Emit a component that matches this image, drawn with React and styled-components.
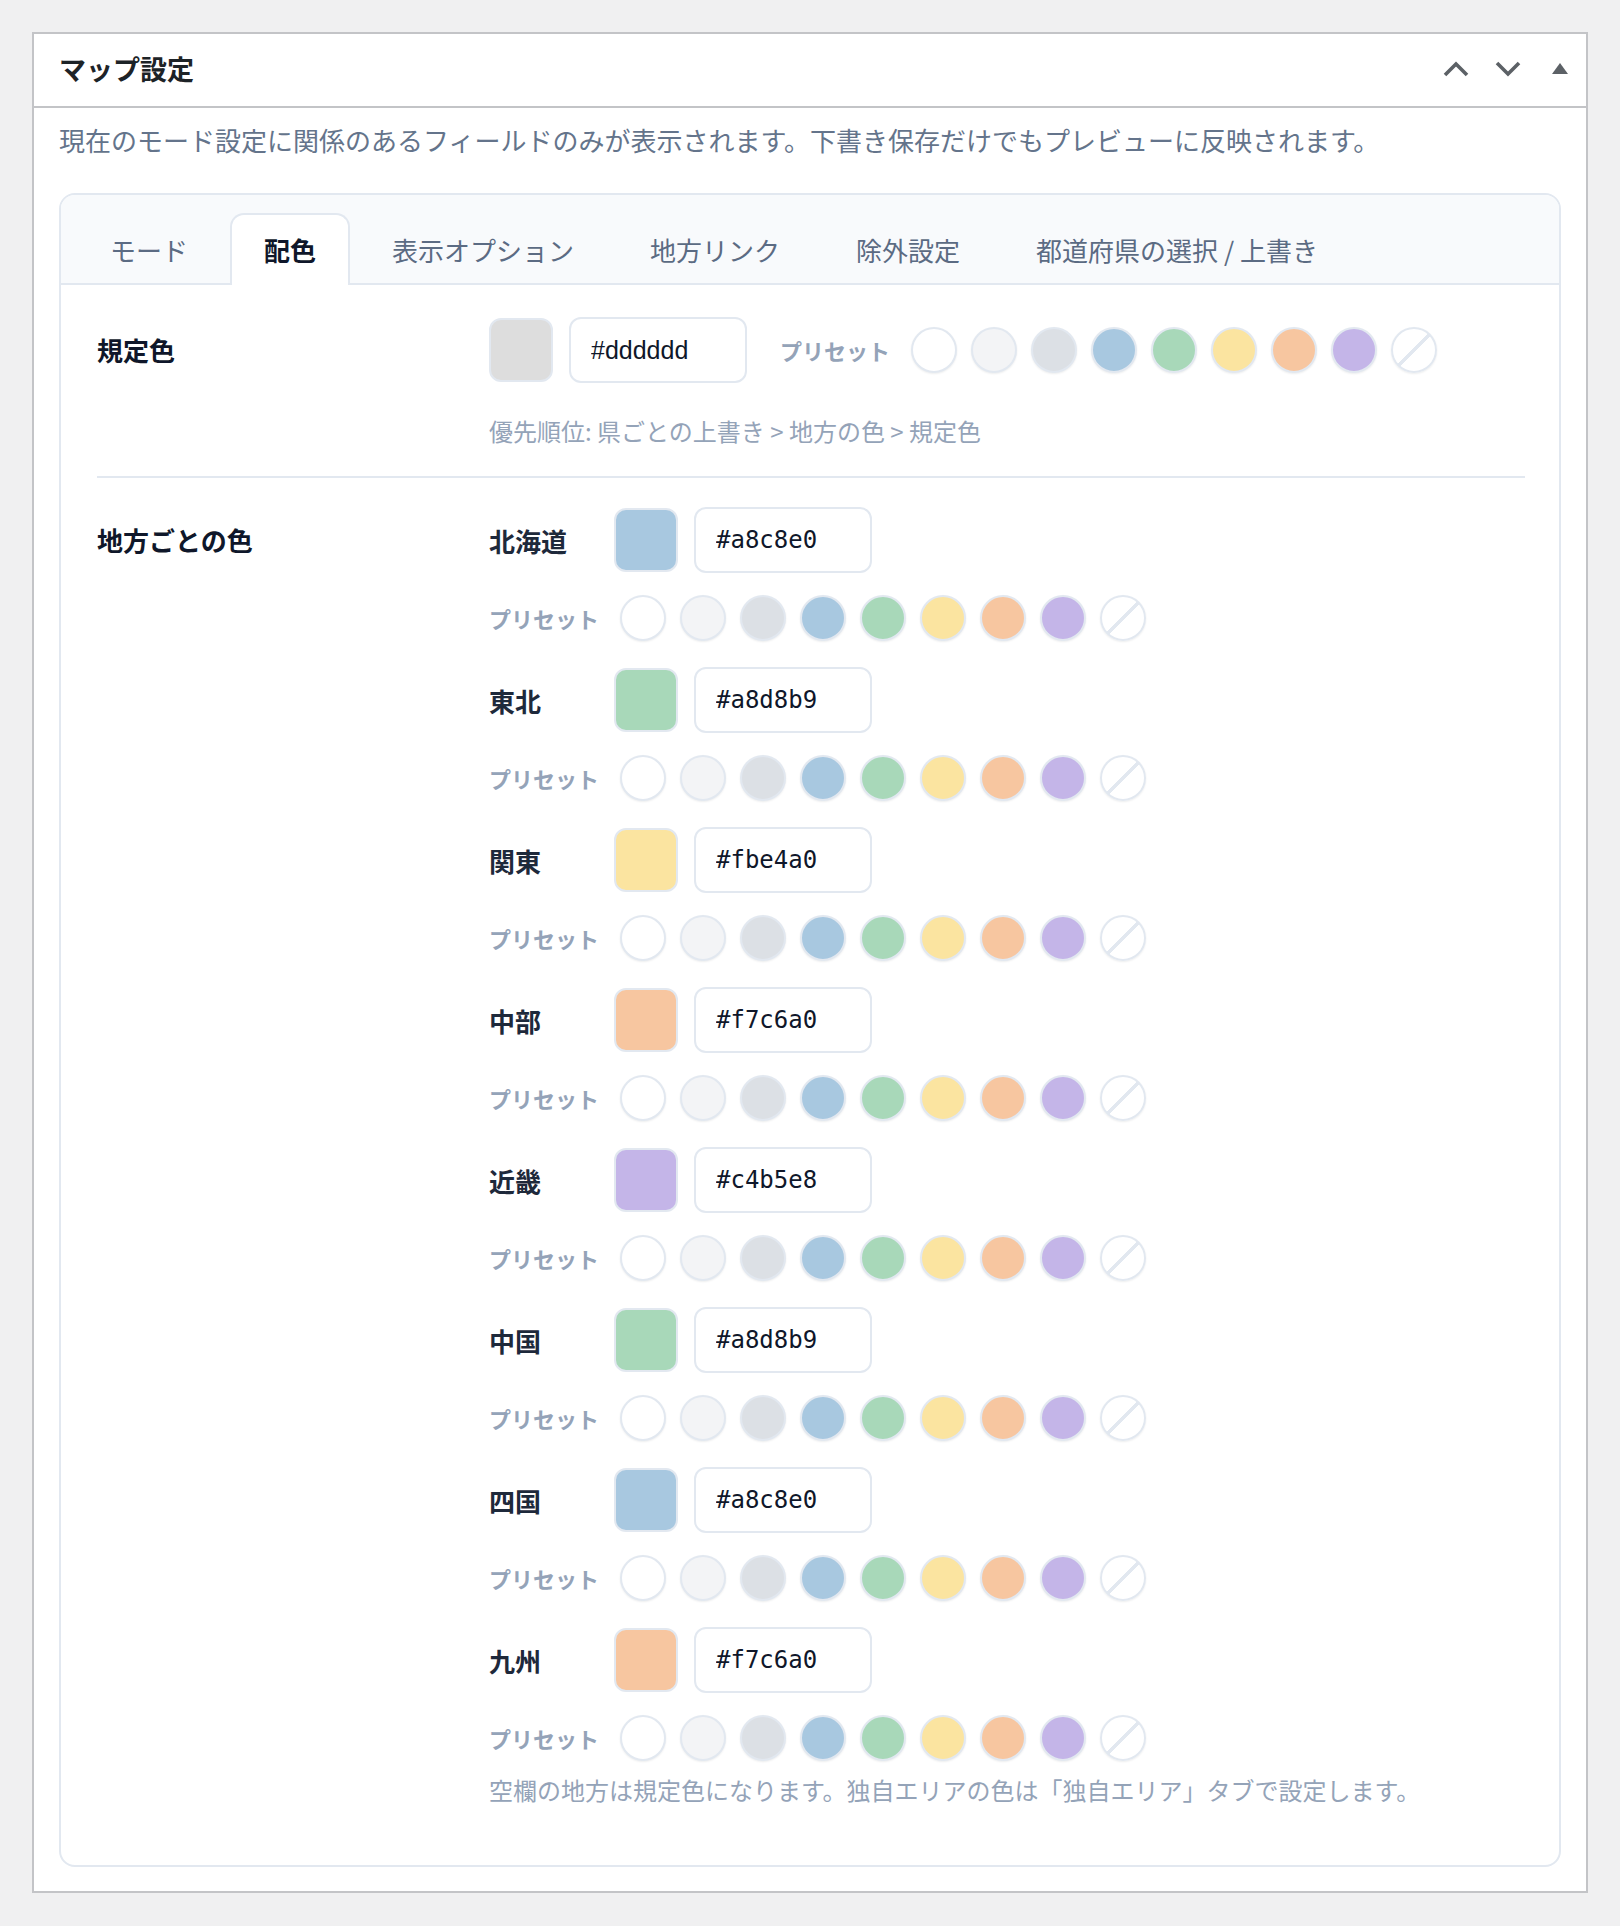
import styled, { createGlobalStyle } from "styled-components";

const GlobalStyle = createGlobalStyle`
    html, body {
        margin: 0;
        background: #f0f0f1;
        font-family: "Noto Sans CJK JP", "Noto Sans", sans-serif;
    }
    * {
        box-sizing: border-box;
    }
`;

const TABS = ["モード", "配色", "表示オプション", "地方リンク", "除外設定", "都道府県の選択 / 上書き"];

const PRESETS = ["#ffffff", "#f3f4f6", "#dce0e5", "#a8c8e0", "#a8d8b9", "#fbe4a0", "#f7c6a0", "#c4b5e8", null];

const REGIONS = [
    { name: "北海道", color: "#a8c8e0" },
    { name: "東北", color: "#a8d8b9" },
    { name: "関東", color: "#fbe4a0" },
    { name: "中部", color: "#f7c6a0" },
    { name: "近畿", color: "#c4b5e8" },
    { name: "中国", color: "#a8d8b9" },
    { name: "四国", color: "#a8c8e0" },
    { name: "九州", color: "#f7c6a0" },
];

const ChevronUp = () => (
    <svg width="26" height="16" viewBox="0 0 26 16">
        <polyline points="2,14 13,3 24,14" fill="none" stroke="#5c6166" strokeWidth="3.6" />
    </svg>
);

const ChevronDown = () => (
    <svg width="26" height="16" viewBox="0 0 26 16">
        <polyline points="2,2 13,13 24,2" fill="none" stroke="#5c6166" strokeWidth="3.6" />
    </svg>
);

const Caret = () => (
    <svg width="16" height="11" viewBox="0 0 16 11">
        <polygon points="8,0 16,11 0,11" fill="#5c6166" />
    </svg>
);

const PresetList = () => (
    <Dots>
        {PRESETS.map((c, i) => (
            <Dot key={i} $color={c} $none={c === null} />
        ))}
    </Dots>
);

const App = () => {
    return (
        <Page>
            <GlobalStyle />
            <Postbox>
                <Header>
                    <Title>マップ設定</Title>
                    <HandleActions>
                        <HandleButton type="button"><ChevronUp /></HandleButton>
                        <HandleButton type="button"><ChevronDown /></HandleButton>
                        <HandleButton type="button"><Caret /></HandleButton>
                    </HandleActions>
                </Header>
                <Inside>
                    <Description>
                        現在のモード設定に関係のあるフィールドのみが表示されます。下書き保存だけでもプレビューに反映されます。
                    </Description>
                    <Card>
                        <TabBar>
                            {TABS.map((t, i) => (
                                <Tab key={t} $active={i === 1}>{t}</Tab>
                            ))}
                        </TabBar>
                        <CardBody>
                            <Field>
                                <FieldLabel>規定色</FieldLabel>
                                <div>
                                    <ColorRow>
                                        <Swatch $color="#dddddd" />
                                        <HexInput defaultValue="#dddddd" $sans />
                                        <InlinePresets>
                                            <PresetLabel>プリセット</PresetLabel>
                                            <PresetList />
                                        </InlinePresets>
                                    </ColorRow>
                                    <Hint>優先順位: 県ごとの上書き &gt; 地方の色 &gt; 規定色</Hint>
                                </div>
                            </Field>
                            <Divider />
                            <Field $last>
                                <FieldLabel>地方ごとの色</FieldLabel>
                                <div>
                                    {REGIONS.map((r) => (
                                        <RegionBlock key={r.name}>
                                            <ColorRow>
                                                <RegionName>{r.name}</RegionName>
                                                <Swatch $color={r.color} />
                                                <HexInput defaultValue={r.color} />
                                            </ColorRow>
                                            <PresetRow>
                                                <PresetLabel>プリセット</PresetLabel>
                                                <PresetList />
                                            </PresetRow>
                                        </RegionBlock>
                                    ))}
                                    <Note>空欄の地方は規定色になります。独自エリアの色は「独自エリア」タブで設定します。</Note>
                                </div>
                            </Field>
                        </CardBody>
                    </Card>
                </Inside>
            </Postbox>
        </Page>
    );
};

export default App;

const Page = styled.div`
    padding: 32px 32px 33px;
`;

const Postbox = styled.div`
    background: #fff;
    border: 2px solid #c3c4c7;
`;

const Header = styled.div`
    height: 74px;
    display: flex;
    align-items: center;
    justify-content: space-between;
    padding: 0 0 3px 25px;
    border-bottom: 2px solid #c3c4c7;
`;

const Title = styled.h2`
    margin: 0;
    font-size: 27px;
    font-weight: 700;
    color: #1d2327;
`;

const HandleActions = styled.div`
    display: flex;
    align-self: stretch;
`;

const HandleButton = styled.button`
    width: 52px;
    padding: 0;
    border: none;
    background: none;
    display: flex;
    align-items: center;
    justify-content: center;
    cursor: pointer;
`;

const Inside = styled.div`
    padding: 12px 25px 24px;
`;

const Description = styled.p`
    margin: 0 0 34px;
    font-size: 26px;
    line-height: 39px;
    color: #64748b;
`;

const Card = styled.div`
    border: 2px solid #e2e8f0;
    border-radius: 16px;
    overflow: hidden;
`;

const TabBar = styled.div`
    display: flex;
    gap: 8px;
    padding: 18px 15px 0;
    background: #f8fafc;
    border-bottom: 2px solid #e2e8f0;
`;

const Tab = styled.div`
    height: 72px;
    margin-bottom: -2px;
    padding: 0 32px 2px;
    display: flex;
    align-items: center;
    font-size: 26px;
    white-space: nowrap;
    border: 2px solid ${(p) => (p.$active ? "#e2e8f0" : "transparent")};
    border-bottom: none;
    border-radius: 14px 14px 0 0;
    background: ${(p) => (p.$active ? "#fff" : "transparent")};
    color: ${(p) => (p.$active ? "#0f172a" : "#5b6b83")};
    font-weight: ${(p) => (p.$active ? 700 : 400)};
    cursor: pointer;
`;

const CardBody = styled.div`
    padding: 32px 34px 0 36px;
`;

const Field = styled.div`
    display: grid;
    grid-template-columns: 392px 1fr;
    padding: ${(p) => (p.$last ? "29px 0 57px" : "0 0 27px")};
`;

const FieldLabel = styled.div`
    font-size: 26px;
    line-height: 66px;
    font-weight: 700;
    color: #0f172a;
`;

const Divider = styled.hr`
    margin: 0;
    border: none;
    border-top: 2px solid #e2e8f0;
`;

const ColorRow = styled.div`
    display: flex;
    align-items: center;
    gap: 16px;
    height: 66px;
`;

const Swatch = styled.div`
    width: 64px;
    height: 64px;
    border-radius: 12px;
    border: 2px solid #e2e8f0;
    background: ${(p) => p.$color};
`;

const HexInput = styled.input`
    width: 178px;
    height: 66px;
    padding: 0 20px;
    border: 2px solid #e2e8f0;
    border-radius: 12px;
    background: #fff;
    color: #0f172a;
    font-size: ${(p) => (p.$sans ? "25px" : "24px")};
    font-family: ${(p) => (p.$sans ? `"Liberation Sans", Arial, sans-serif` : `"DejaVu Sans Mono", "Liberation Mono", monospace`)};
    outline: none;
`;

const InlinePresets = styled.div`
    display: flex;
    align-items: center;
    gap: 21px;
    margin-left: 17px;
`;

const PresetLabel = styled.span`
    font-size: 22px;
    font-weight: 700;
    color: #94a3b8;
    white-space: nowrap;
`;

const Dots = styled.div`
    display: flex;
    gap: 14px;
`;

const Dot = styled.span`
    width: 46px;
    height: 46px;
    border-radius: 50%;
    border: 2px solid #e2e8f0;
    box-shadow: 0 1px 2px rgba(15, 23, 42, 0.08);
    background: ${(p) =>
        p.$none
            ? "linear-gradient(to bottom right, #fff calc(50% - 1.6px), #e2e8f0 calc(50% - 1.6px), #e2e8f0 calc(50% + 1.6px), #fff calc(50% + 1.6px))"
            : p.$color};
    cursor: pointer;
`;

const Hint = styled.div`
    margin-top: 30px;
    font-size: 24px;
    line-height: 36px;
    color: #94a3b8;
`;

const RegionBlock = styled.div`
    & + & {
        margin-top: 26px;
    }
`;

const RegionName = styled.span`
    width: 109px;
    font-size: 26px;
    font-weight: 700;
    color: #1e293b;
`;

const PresetRow = styled.div`
    display: flex;
    align-items: center;
    gap: 21px;
    height: 46px;
    margin-top: 22px;
`;

const Note = styled.div`
    margin-top: 11px;
    font-size: 24px;
    line-height: 36px;
    color: #94a3b8;
`;
